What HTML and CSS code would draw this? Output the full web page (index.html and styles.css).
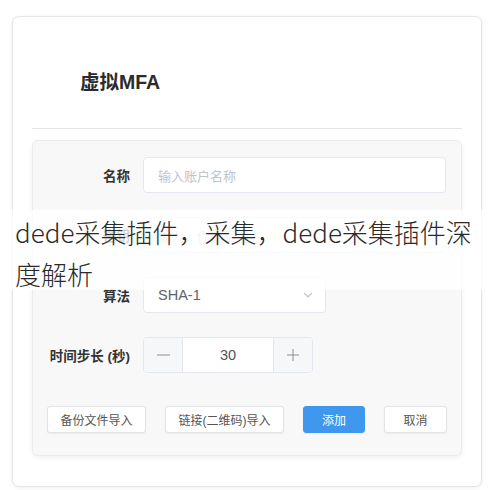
FILE: index.html
```html
<!DOCTYPE html>
<html lang="zh-CN">
<head>
<meta charset="utf-8">
<title>虚拟MFA</title>
<link rel="stylesheet" href="styles.css">
</head>
<body>
<div class="card">
  <div class="card-header"><h1 class="title">虚拟MFA</h1></div>
  <div class="panel">
    <div class="form-row">
      <label class="label">名称</label>
      <div class="input wide"><span class="placeholder">输入账户名称</span></div>
    </div>
    <div class="form-row">
      <label class="label">密钥</label>
      <div class="input wide"><span class="placeholder">输入，你的密钥</span></div>
    </div>
    <div class="form-row">
      <label class="label">算法</label>
      <div class="input select"><span class="value">SHA-1</span>
        <svg class="chevron" width="10" height="6" viewBox="0 0 10 6"><path d="M1 1 L5 5 L9 1" fill="none" stroke="#c0c4cc" stroke-width="1.2"/></svg>
      </div>
    </div>
    <div class="form-row">
      <label class="label">时间步长 (秒)</label>
      <div class="stepper">
        <span class="step-btn minus"><svg width="13" height="2" viewBox="0 0 13 2"><path d="M0 1 H13" stroke="#8a8d93" stroke-width="1.2"/></svg></span>
        <span class="step-value">30</span>
        <span class="step-btn plus"><svg width="12" height="12" viewBox="0 0 12 12"><path d="M0 6 H12 M6 0 V12" stroke="#8a8d93" stroke-width="1"/></svg></span>
      </div>
    </div>
    <div class="actions">
      <button class="btn b1">备份文件导入</button>
      <button class="btn b2">链接(二维码)导入</button>
      <button class="btn primary b3">添加</button>
      <button class="btn b4">取消</button>
    </div>
  </div>
</div>
<div class="overlay">dede采集插件，采集，dede采集插件深<br>度解析</div>
</body>
</html>
```

FILE: styles.css
```css
* { box-sizing: border-box; }
html, body { margin: 0; padding: 0; background: #ffffff; }
body {
  font-family: "Liberation Sans", "Noto Sans CJK SC", sans-serif;
  color: #333;
  width: 493px;
  height: 490px;
  overflow: hidden;
  position: relative;
}
.card {
  margin: 16px 0 0 12px;
  width: 470px;
  height: 471px;
  background: #fff;
  border: 1px solid #e6e6e6;
  border-radius: 7px;
  box-shadow: 0 1px 4px rgba(0,0,0,0.07);
  padding: 0 19px 0 19px;
}
.card-header {
  height: 112px;
  border-bottom: 1px solid #e3e3e3;
  padding: 53px 0 0 48px;
}
.title {
  margin: 0;
  font-size: 19.5px;
  line-height: 24px;
  font-weight: 700;
  color: #2b2b2b;
}
.panel {
  margin-top: 11px;
  width: 430px;
  background: #f8f8f9;
  border: 1px solid #ebebeb;
  border-radius: 6px;
  box-shadow: 0 2px 5px rgba(0,0,0,0.06);
  padding: 16px 14px 22px 14px;
  display: flex;
  flex-direction: column;
  gap: 24px;
}
.form-row {
  display: flex;
  align-items: center;
  gap: 13px;
}
.label {
  width: 83px;
  text-align: right;
  font-size: 13.5px;
  font-weight: 700;
  color: #333;
  white-space: nowrap;
}
.input {
  height: 36px;
  background: #fff;
  border: 1px solid #e4e7ed;
  border-radius: 4px;
  display: flex;
  align-items: center;
  padding: 0 14px;
  font-size: 13px;
}
.wide { width: 303px; }
.select { width: 183px; justify-content: space-between; padding-right: 12px; }
.placeholder { color: #c0c4cc; }
.value { color: #606266; font-size: 14.5px; }
.stepper {
  width: 170px;
  height: 36px;
  display: flex;
  border: 1px solid #e4e7ed;
  border-radius: 4px;
  background: #fff;
  overflow: hidden;
}
.step-btn {
  width: 39px;
  background: #f6f7f9;
  display: flex;
  align-items: center;
  justify-content: center;
}
.minus { border-right: 1px solid #e4e7ed; }
.plus { border-left: 1px solid #e4e7ed; }
.step-value {
  flex: 1;
  display: flex;
  align-items: center;
  justify-content: center;
  font-size: 14.5px;
  color: #505256;
}
.actions {
  display: flex;
  gap: 19px;
  margin-top: 9px;
}
.btn {
  height: 27px;
  font-family: "Liberation Sans", "Noto Sans CJK SC", sans-serif;
  font-size: 12px;
  color: #555;
  background: #fff;
  border: 1px solid #e2e4e8;
  border-radius: 3px;
  padding: 0;
  box-shadow: 0 1px 2px rgba(0,0,0,0.05);
}
.b1 { width: 99px; }
.b2 { width: 119px; }
.b3 { width: 62px; }
.b4 { width: 63px; }
.primary {
  background: #3f97ee;
  border-color: #3f97ee;
  color: #fff;
}
.overlay {
  position: absolute;
  left: 0;
  right: 0;
  top: 210px;
  height: 80px;
  background: rgba(255,255,255,0.78);
  padding: 1px 0 0 15px;
  font-family: "Noto Sans CJK SC", sans-serif;
  font-weight: 300;
  font-size: 26px;
  line-height: 42px;
  color: #2a2a2a;
  white-space: nowrap;
  overflow: visible;
}
```
